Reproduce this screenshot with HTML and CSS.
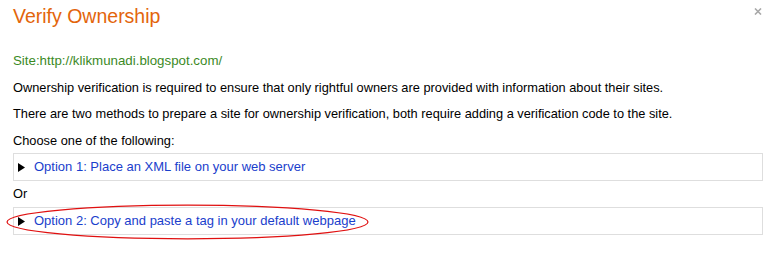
FILE: index.html
```html
<!DOCTYPE html>
<html lang="en">
<head>
<meta charset="utf-8">
<title>Verify Ownership</title>
<link rel="stylesheet" href="styles.css">
</head>
<body>
<div class="dialog">
  <h1 class="title">Verify Ownership</h1>
  <span class="close" aria-label="Close"><svg width="8" height="7" viewBox="0 0 8 7"><path d="M1 0.5 L7 6.5 M7 0.5 L1 6.5" stroke="#a8a8a8" stroke-width="1.6" fill="none"/></svg></span>
  <p class="site">Site:http://klikmunadi.blogspot.com/</p>
  <p class="text">Ownership verification is required to ensure that only rightful owners are provided with information about their sites.</p>
  <p class="text">There are two methods to prepare a site for ownership verification, both require adding a verification code to the site.</p>
  <p class="text">Choose one of the following:</p>
  <div class="option option-first">
    <svg class="tri" width="7" height="9" viewBox="0 0 7 9"><polygon points="0,0 7,4.5 0,9" fill="#000"/></svg>
    <a class="opt-link" href="#">Option 1: Place an XML file on your web server</a>
  </div>
  <p class="text or">Or</p>
  <div class="option option-second">
    <svg class="tri" width="7" height="9" viewBox="0 0 7 9"><polygon points="0,0 7,4.5 0,9" fill="#000"/></svg>
    <a class="opt-link" href="#">Option 2: Copy and paste a tag in your default webpage</a>
  </div>
  <svg class="mark" width="370" height="40" viewBox="0 0 370 40"><ellipse cx="181.5" cy="18" rx="180.5" ry="16.8" fill="none" stroke="#e01010" stroke-width="1.2"/></svg>
</div>
</body>
</html>
```

FILE: styles.css
```css
html, body {
  margin: 0;
  padding: 0;
  background: #ffffff;
}

.dialog {
  position: relative;
  width: 773px;
  height: 254px;
  box-sizing: border-box;
  padding: 5px 10px 0 13px;
  font-family: "Liberation Sans", Arial, sans-serif;
  font-size: 13px;
  color: #000;
}

.title {
  margin: 0;
  font-size: 19.5px;
  line-height: 22px;
  font-weight: normal;
  color: #e3650b;
}

.close {
  position: absolute;
  top: 8px;
  left: 754px;
  width: 8px;
  height: 7px;
  line-height: 0;
}

.site {
  margin: 26px 0 0;
  font-size: 13.3px;
  line-height: 16px;
  color: #3b8a1f;
}

.text {
  margin: 10.5px 0 0;
  font-size: 12.8px;
  line-height: 16px;
}

.option {
  display: flex;
  align-items: center;
  gap: 9px;
  padding: 5px 4px;
  border: 1px solid #dedede;
  line-height: 16px;
}

.option-first {
  margin-top: 4.5px;
}

.option-second {
  margin-top: 5.5px;
}

.or {
  margin-top: 4.5px;
}

.tri {
  display: block;
  flex: none;
}

.opt-link {
  color: #1a40cc;
  text-decoration: none;
}

.mark {
  position: absolute;
  left: 6px;
  top: 204px;
}
```
